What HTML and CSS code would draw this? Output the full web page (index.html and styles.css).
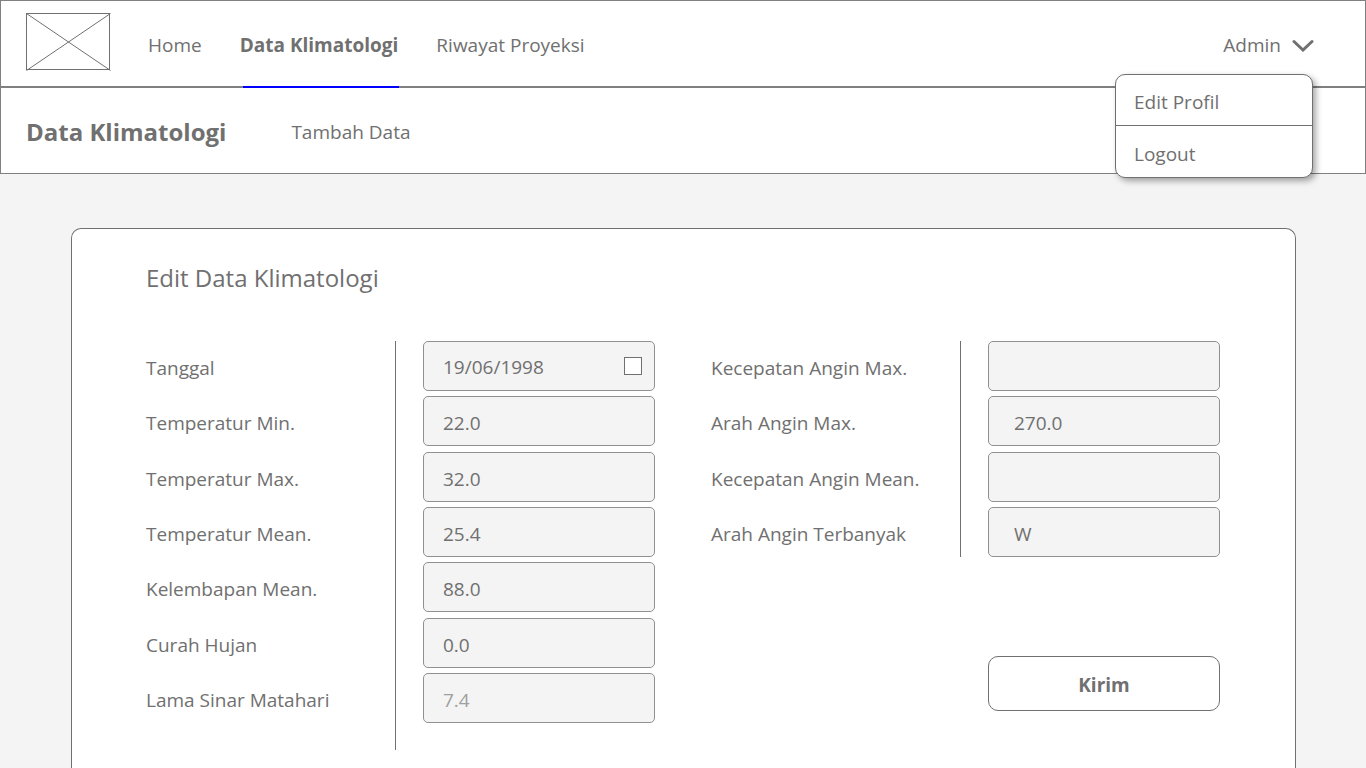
FILE: index.html
```html
<!DOCTYPE html>
<html lang="id">
<head>
  <meta charset="utf-8">
  <meta name="viewport" content="width=device-width, initial-scale=1">
  <title>Edit Data Klimatologi</title>
  <link rel="stylesheet" href="styles.css">
</head>
<body>
  <header class="header">
    <div class="topbar">
      <a class="logo" href="#" aria-label="Beranda">
        <svg width="86" height="60" viewBox="0 0 86 60" fill="none" stroke="#707070">
          <rect x="0.5" y="0.5" width="83" height="56"/>
          <path d="M0.5 0.5 84.5 57.5M84.5 0.5 0.5 57.5"/>
        </svg>
      </a>
      <nav class="nav">
        <a class="nav-link" href="#">Home</a>
        <a class="nav-link nav-link-active" href="#" aria-current="page">Data Klimatologi</a>
        <a class="nav-link" href="#">Riwayat Proyeksi</a>
      </nav>
      <div class="account">
        <button class="account-button" type="button" aria-expanded="true">
          Admin
          <svg width="22" height="14" viewBox="0 0 22 14" fill="none" stroke="#707070" stroke-width="3" stroke-linecap="round"><path d="M2 3.5 11 12 20 3.5"/></svg>
        </button>
        <div class="menu">
          <a class="menu-item" href="#">Edit Profil</a>
          <a class="menu-item" href="#">Logout</a>
        </div>
      </div>
    </div>
    <div class="subbar">
      <h1 class="page-title">Data Klimatologi</h1>
      <a class="sub-link" href="#">Tambah Data</a>
    </div>
  </header>

  <main class="card">
    <h2 class="card-title">Edit Data Klimatologi</h2>
    <form class="form">
      <div class="group group-long">
        <span class="divider"></span>
        <label class="label" for="tanggal">Tanggal</label>
        <div class="field date-field">
          <input class="date-input" id="tanggal" type="text" value="19/06/1998">
          <input class="date-check" type="checkbox" aria-label="Pilih tanggal">
        </div>
        <label class="label" for="tmin">Temperatur Min.</label>
        <input class="field" id="tmin" type="text" value="22.0">
        <label class="label" for="tmax">Temperatur Max.</label>
        <input class="field" id="tmax" type="text" value="32.0">
        <label class="label" for="tmean">Temperatur Mean.</label>
        <input class="field" id="tmean" type="text" value="25.4">
        <label class="label" for="lembap">Kelembapan Mean.</label>
        <input class="field" id="lembap" type="text" value="88.0">
        <label class="label" for="hujan">Curah Hujan</label>
        <input class="field" id="hujan" type="text" value="0.0">
        <label class="label" for="sinar">Lama Sinar Matahari</label>
        <input class="field field-muted" id="sinar" type="text" value="7.4">
      </div>
      <div class="side">
        <div class="group group-short">
          <span class="divider"></span>
          <label class="label" for="kmax">Kecepatan Angin Max.</label>
          <input class="field" id="kmax" type="text">
          <label class="label" for="amax">Arah Angin Max.</label>
          <input class="field" id="amax" type="text" value="270.0">
          <label class="label" for="kmean">Kecepatan Angin Mean.</label>
          <input class="field" id="kmean" type="text">
          <label class="label" for="aban">Arah Angin Terbanyak</label>
          <input class="field" id="aban" type="text" value="W">
        </div>
        <button class="submit" type="submit">Kirim</button>
      </div>
    </form>
  </main>
</body>
</html>
```
FILE: styles.css
```css
* {
  box-sizing: border-box;
}

body {
  margin: 0;
  min-height: 100vh;
  display: flex;
  flex-direction: column;
  background: #f4f4f4;
  color: #707070;
  font: 19px/26px "Segoe UI", "Open Sans", "Noto Sans", sans-serif;
}

a {
  color: inherit;
  text-decoration: none;
}

input,
button {
  font: inherit;
  color: inherit;
}

.header {
  background: #fff;
  border: 1px solid #808080;
}

.topbar {
  display: flex;
  align-items: stretch;
  height: 87px;
  padding: 0 51px 0 25px;
  border-bottom: 2px solid #808080;
}

.logo {
  padding-top: 12px;
}

.logo svg {
  display: block;
}

.nav {
  display: flex;
  gap: 38px;
  margin-left: 36px;
}

.nav-link {
  position: relative;
  padding-top: 31px;
}

.nav-link-active {
  font-weight: 700;
}

.nav-link-active::after {
  content: "";
  position: absolute;
  left: 3px;
  right: -1px;
  bottom: -2px;
  height: 2px;
  background: #00f;
}

.account {
  position: relative;
  margin-left: auto;
}

.account-button {
  display: flex;
  align-items: center;
  gap: 11px;
  margin-top: 31px;
  padding: 0;
  border: 0;
  background: none;
}

.menu {
  position: absolute;
  z-index: 1;
  top: 73px;
  right: 1px;
  width: 198px;
  border: 1px solid #707070;
  border-radius: 10px;
  background: #fff;
  box-shadow: 3px 3px 6px rgba(0, 0, 0, 0.35);
}

.menu-item {
  display: block;
  padding: 14px 18px 10px;
}

.menu-item + .menu-item {
  padding-top: 15px;
  border-top: 1px solid #707070;
}

.subbar {
  display: flex;
  align-items: center;
  gap: 65px;
  height: 85px;
  padding: 2px 25px 0;
}

.page-title {
  margin: 0;
  font-size: 24px;
  line-height: 32px;
}

.card {
  flex: 1;
  margin: 54px 70px 0 71px;
  padding: 33px 75px 17px 74px;
  background: #fff;
  border: 1px solid #707070;
  border-bottom: 0;
  border-radius: 10px 10px 0 0;
}

.card-title {
  margin: 0 0 47px;
  font-size: 24px;
  font-weight: 400;
  line-height: 32px;
}

.form {
  display: grid;
  grid-template-columns: 1fr 1fr;
  gap: 56px;
}

.group {
  display: grid;
  grid-template-columns: 1fr 1px 27px 232px;
  align-content: space-between;
}

.group-long {
  min-height: 382px;
  margin-bottom: 27px;
}

.group-short {
  min-height: 216px;
}

.divider {
  grid-column: 2;
  background: #707070;
}

.group-long .divider {
  grid-row: 1 / span 7;
  margin-bottom: -27px;
}

.group-short .divider {
  grid-row: 1 / span 4;
}

.label {
  grid-column: 1;
  align-self: center;
  padding-top: 4px;
}

.field {
  grid-column: 4;
  width: 100%;
  height: 50px;
  padding: 4px 19px 0;
  background: #f4f4f4;
  border: 1px solid #909090;
  border-radius: 5px;
}

.side .field {
  padding-left: 25px;
}

.field-muted {
  color: #a0a0a0;
}

.date-field {
  display: flex;
  align-items: center;
  justify-content: space-between;
  padding: 0 12px 0 19px;
}

.date-input {
  width: 140px;
  padding: 2px 0 0;
  border: 0;
  background: none;
}

.date-check {
  appearance: none;
  width: 18px;
  height: 18px;
  margin: 0;
  background: #fff;
  border: 1px solid #707070;
}

.side {
  display: flex;
  flex-direction: column;
}

.submit {
  align-self: flex-end;
  width: 232px;
  height: 55px;
  margin-top: 99px;
  padding: 3px 0 0;
  background: #fff;
  border: 1px solid #707070;
  border-radius: 10px;
  font-weight: 700;
}
```
